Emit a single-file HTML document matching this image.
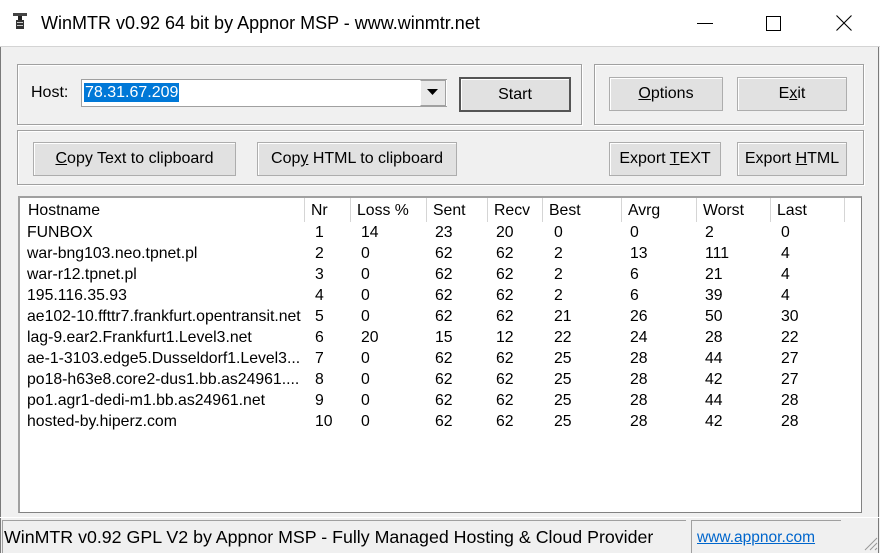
<!DOCTYPE html>
<html><head><style>
*{margin:0;padding:0;box-sizing:border-box}
body{width:880px;height:553px;background:#f0f0f0;font-family:"Liberation Sans",sans-serif;font-size:15px;color:#000;position:relative;overflow:hidden}
.a{position:absolute}
.title{left:0;top:0;width:880px;height:47px;background:#fff;border-bottom:1px solid #d4d4d4}
.grp{position:absolute;border:1px solid #a0a0a0;box-shadow:inset 1px 1px 0 #fff,1px 1px 0 #fff}
.btn{position:absolute;background:#e1e1e1;border:1px solid #adadad;box-shadow:inset 1px 1px 0 #fff;text-align:center;line-height:32px;font-size:16px;white-space:pre}
.lst{left:18px;top:196px;width:844px;height:317px;background:#fff;border:1px solid #828282;border-top:2px solid #a0a0a0;border-left:2px solid #a0a0a0}
.hd{position:absolute;top:0;height:24px;border-right:1px solid #d5d5d5;padding-left:6px;line-height:26px;font-size:15.8px}
.c{position:absolute;font-size:15.8px;white-space:nowrap}
</style></head><body>
<div style="position:absolute;left:0;top:0;width:1px;height:553px;background:#7a7a7a"></div>
<div style="position:absolute;right:1px;top:0;width:1px;height:553px;background:#7a7a7a"></div>
<div class="a title">
<svg class="a" style="left:12px;top:12px" width="16" height="20" viewBox="0 0 16 20"><rect x="1" y="1" width="14" height="3" fill="#444"/><rect x="6" y="4" width="4" height="4" fill="#222"/><rect x="4" y="8" width="8" height="9" fill="#333"/><rect x="5" y="10" width="6" height="1" fill="#ccc"/><rect x="5" y="13" width="6" height="1" fill="#ccc"/></svg>
<div class="a" style="left:41px;top:13px;font-size:18px">WinMTR v0.92 64 bit by Appnor MSP - www.winmtr.net</div>
<div class="a" style="left:697px;top:23px;width:16px;height:1px;background:#000"></div>
<div class="a" style="left:766px;top:16px;width:15px;height:15px;border:1px solid #000"></div>
<svg class="a" style="left:836px;top:15px" width="16" height="16"><path d="M0.5 0.5L15.5 15.5M15.5 0.5L0.5 15.5" stroke="#000" stroke-width="1.1"/></svg>
</div>
<div class="grp" style="left:17px;top:64px;width:565px;height:61px"></div>
<div class="grp" style="left:594px;top:64px;width:270px;height:61px"></div>
<div class="grp" style="left:17px;top:130px;width:847px;height:55px"></div>
<div class="a" style="left:31px;top:84px;font-size:16px">Host:</div>
<div class="a" style="left:81px;top:79px;width:366px;height:28px;background:#fff;border:1px solid #a0a0a0;border-right:none"></div>
<div class="a" style="left:84px;top:83px;background:#0078d7;color:#fff;font-size:16px;padding:0 1px;line-height:19px">78.31.67.209</div>
<div class="a" style="left:420px;top:80px;width:26px;height:26px;background:#e8e8e8;border:1px solid #a0a0a0;border-left:1px solid #fff"></div>
<svg class="a" style="left:427px;top:89px" width="12" height="8"><path d="M0 0H11L5.5 6Z" fill="#000"/></svg>
<div class="btn" style="left:459px;top:77px;width:112px;height:35px;border:2px solid #555;line-height:31px">Start</div>
<div class="btn" style="left:609px;top:77px;width:114px;height:34px"><u>O</u>ptions</div>
<div class="btn" style="left:737px;top:77px;width:110px;height:34px">E<u>x</u>it</div>
<div class="btn" style="left:33px;top:142px;width:203px;height:34px"><u>C</u>opy Text to clipboard</div>
<div class="btn" style="left:257px;top:142px;width:200px;height:34px">Cop<u>y</u> HTML to clipboard</div>
<div class="btn" style="left:609px;top:142px;width:112px;height:34px">Export <u>T</u>EXT</div>
<div class="btn" style="left:737px;top:142px;width:110px;height:34px">Export <u>H</u>TML</div>
<div class="a lst">
<div class="hd" style="left:2px;width:283px">Hostname</div>
<div class="hd" style="left:285px;width:46px">Nr</div>
<div class="hd" style="left:331px;width:76px">Loss %</div>
<div class="hd" style="left:407px;width:61px">Sent</div>
<div class="hd" style="left:468px;width:55px">Recv</div>
<div class="hd" style="left:523px;width:79px">Best</div>
<div class="hd" style="left:602px;width:75px">Avrg</div>
<div class="hd" style="left:677px;width:74px">Worst</div>
<div class="hd" style="left:751px;width:74px">Last</div>
</div>
<div id="rows"></div>
<script>
var d=[["FUNBOX",1,14,23,20,0,0,2,0],["war-bng103.neo.tpnet.pl",2,0,62,62,2,13,111,4],["war-r12.tpnet.pl",3,0,62,62,2,6,21,4],["195.116.35.93",4,0,62,62,2,6,39,4],["ae102-10.ffttr7.frankfurt.opentransit.net",5,0,62,62,21,26,50,30],["lag-9.ear2.Frankfurt1.Level3.net",6,20,15,12,22,24,28,22],["ae-1-3103.edge5.Dusseldorf1.Level3...",7,0,62,62,25,28,44,27],["po18-h63e8.core2-dus1.bb.as24961....",8,0,62,62,25,28,42,27],["po1.agr1-dedi-m1.bb.as24961.net",9,0,62,62,25,28,44,28],["hosted-by.hiperz.com",10,0,62,62,25,28,42,28]];
var xs=[27,315,361,435,496,554,630,705,781],h="";
d.forEach(function(r,i){r.forEach(function(v,j){h+='<div class="c" style="left:'+xs[j]+'px;top:'+(224+i*21)+'px">'+v+'</div>'})});
document.getElementById('rows').innerHTML=h;
</script>
<div class="a" style="left:0;top:517px;width:880px;height:1px;background:#fff"></div>
<div class="a" style="left:2px;top:520px;width:684px;height:33px;border-top:1px solid #a0a0a0;border-left:1px solid #a0a0a0"></div>
<div class="a" style="left:691px;top:520px;width:150px;height:33px;border-top:1px solid #a0a0a0;border-left:1px solid #a0a0a0"></div>
<div class="a" style="left:4px;top:527px;font-size:17.8px">WinMTR v0.92 GPL V2 by Appnor MSP - Fully Managed Hosting &amp; Cloud Provider</div>
<div class="a" style="left:697px;top:529px;font-size:15.5px;color:#0066cc;text-decoration:underline">www.appnor.com</div>
<svg class="a" style="left:862px;top:535px" width="16" height="16"><path d="M15 3L3 15M15 8L8 15M15 13L13 15" stroke="#999"/></svg>
</body></html>
